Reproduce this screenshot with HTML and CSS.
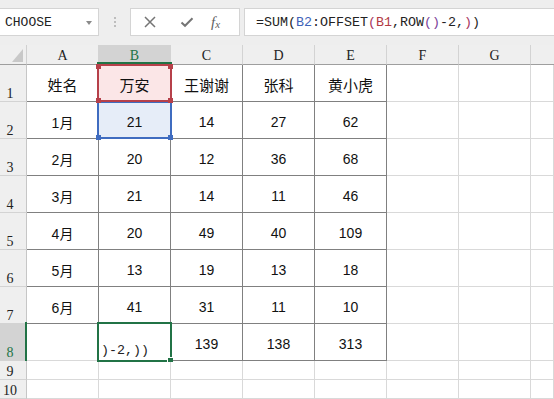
FILE: index.html
```html
<!DOCTYPE html>
<html>
<head>
<meta charset="utf-8">
<link rel="stylesheet" href="styles.css">
</head>
<body>
<div class="app">
  <div class="fbar">
    <div class="namebox"><span class="nb-text">CHOOSE</span><span class="caret"></span></div>
    <div class="grip"><i></i><i></i><i></i></div>
    <div class="btns">
      <svg class="ico" width="14" height="14" viewBox="0 0 14 14"><path d="M2 2 L12 12 M12 2 L2 12" stroke="#757575" stroke-width="1.5" fill="none"/></svg>
      <svg class="ico" width="16" height="14" viewBox="0 0 16 14"><path d="M2.5 7.5 L6 10.8 L13.5 3.2" stroke="#757575" stroke-width="2" fill="none"/></svg>
      <span class="fx">f<sub>x</sub></span>
    </div>
    <div class="formula"><span>=SUM(</span><span class="rb">B2</span><span>:OFFSET</span><span class="p1">(</span><span class="rr">B1</span><span>,ROW</span><span class="p2">()</span><span>-2,</span><span class="p1">)</span><span>)</span></div>
  </div>
  <div class="sheet">
    <div class="grid">
      <div class="corner"><span class="tri"></span></div>
      <div class="ch">A</div><div class="ch sel">B</div><div class="ch">C</div><div class="ch">D</div><div class="ch">E</div><div class="ch">F</div><div class="ch">G</div><div class="ch last"></div>

      <div class="rh">1</div>
      <div class="c t cj">姓名</div><div class="c t cj red">万安</div><div class="c t cj">王谢谢</div><div class="c t cj">张科</div><div class="c t cj">黄小虎</div><div class="c"></div><div class="c"></div><div class="c"></div>

      <div class="rh">2</div>
      <div class="c t">1月</div><div class="c t blue">21</div><div class="c t">14</div><div class="c t">27</div><div class="c t">62</div><div class="c"></div><div class="c"></div><div class="c"></div>

      <div class="rh">3</div>
      <div class="c t">2月</div><div class="c t">20</div><div class="c t">12</div><div class="c t">36</div><div class="c t">68</div><div class="c"></div><div class="c"></div><div class="c"></div>

      <div class="rh">4</div>
      <div class="c t">3月</div><div class="c t">21</div><div class="c t">14</div><div class="c t">11</div><div class="c t">46</div><div class="c"></div><div class="c"></div><div class="c"></div>

      <div class="rh">5</div>
      <div class="c t">4月</div><div class="c t">20</div><div class="c t">49</div><div class="c t">40</div><div class="c t">109</div><div class="c"></div><div class="c"></div><div class="c"></div>

      <div class="rh">6</div>
      <div class="c t">5月</div><div class="c t">13</div><div class="c t">19</div><div class="c t">13</div><div class="c t">18</div><div class="c"></div><div class="c"></div><div class="c"></div>

      <div class="rh">7</div>
      <div class="c t">6月</div><div class="c t">41</div><div class="c t">31</div><div class="c t">11</div><div class="c t">10</div><div class="c"></div><div class="c"></div><div class="c"></div>

      <div class="rh rsel">8</div>
      <div class="c"></div><div class="c edit"><span>)-2,))</span></div><div class="c t">139</div><div class="c t">138</div><div class="c t">313</div><div class="c"></div><div class="c"></div><div class="c"></div>

      <div class="rh sm">9</div>
      <div class="c"></div><div class="c"></div><div class="c"></div><div class="c"></div><div class="c"></div><div class="c"></div><div class="c"></div><div class="c"></div>

      <div class="rh sm">10</div>
      <div class="c"></div><div class="c"></div><div class="c"></div><div class="c"></div><div class="c"></div><div class="c"></div><div class="c"></div><div class="c"></div>
    </div>
    <div class="hl hl-blue"><i class="sq bl"></i><i class="sq br"></i></div>
    <div class="hl hl-red"><i class="sq tl"></i><i class="sq tr"></i><i class="sq bl"></i><i class="sq br"></i></div>
    <div class="hl hl-green"><i class="handle"></i></div>
    <div class="hdr-line"></div>
    <div class="row-line"></div>
  </div>
</div>
</body>
</html>
```
FILE: styles.css
```css
* { box-sizing: border-box; margin: 0; padding: 0; }
html, body { width: 554px; height: 399px; overflow: hidden; background: #fff; }
body { font-family: "Liberation Sans", "Noto Sans CJK SC", sans-serif; color: #111; }

.app { width: 554px; height: 399px; display: flex; flex-direction: column; }

.fbar {
  height: 45px;
  flex: none;
  background: #eeeeee;
  display: flex;
  align-items: flex-start;
  padding-top: 8px;
}
.namebox {
  width: 99px; height: 28px;
  background: #fff;
  border: 1px solid #d4d4d4;
  border-left: none;
  display: flex; align-items: center;
  padding-left: 5px;
  position: relative;
}
.nb-text { font-family: "Liberation Mono", monospace; font-size: 13px; color: #222; }
.caret {
  position: absolute; right: 6px; top: 12px;
  width: 0; height: 0;
  border-left: 3.5px solid transparent; border-right: 3.5px solid transparent;
  border-top: 4px solid #8a8a8a;
}
.grip { width: 31px; height: 28px; display: flex; flex-direction: column; align-items: center; justify-content: center; gap: 2px; }
.grip i { display: block; width: 2px; height: 2px; background: #bdbdbd; }
.btns {
  width: 110px; height: 28px;
  background: #fff;
  border: 1px solid #d4d4d4;
  display: flex; align-items: center;
  padding-left: 12px;
}
.btns .ico:first-child { margin-right: 22px; }
.btns .ico:nth-child(2) { margin-right: 16px; }
.fx { font-family: "Liberation Serif", serif; font-style: italic; font-size: 15px; color: #5f5f5f; line-height: 1; }
.fx sub { font-size: 11px; vertical-align: -1px; }
.formula {
  margin-left: 4px;
  flex: 1; height: 28px;
  background: #fff;
  border: 1px solid #d4d4d4;
  border-right: none;
  display: flex; align-items: center;
  padding-left: 11px;
  font-family: "Liberation Mono", monospace; font-size: 13.33px; color: #222;
  white-space: pre;
}
.rb { color: #3d63b8; }
.rr { color: #b23a44; }
.p1 { color: #a8345e; }
.p2 { color: #7b3f9a; }

.sheet { position: relative; flex: 1; }
.grid {
  display: grid;
  grid-template-columns: 27px repeat(7, 72px) 1fr;
  grid-template-rows: 20px repeat(8, 37px) 19px 19px;
}
.corner {
  background: #efefef;
  border-right: 1px solid #d0d0d0;
  border-bottom: 1px solid #9e9e9e;
  position: relative;
}
.tri {
  position: absolute; right: 3px; bottom: 2px;
  width: 0; height: 0;
  border-left: 11px solid transparent;
  border-bottom: 13px solid #c8c8c8;
}
.ch {
  background: #efefef;
  border-right: 1px solid #d3d3d3;
  border-bottom: 1px solid #9e9e9e;
  font-family: "Liberation Serif", serif; font-size: 14px; color: #222;
  display: flex; justify-content: center; align-items: flex-end;
  padding-bottom: 1px; line-height: 15px;
}
.ch.sel { background: #d3d3d3; color: #217346; border-bottom-color: #217346; }
.ch.last { border-right: none; }
.rh {
  background: #efefef;
  border-right: 1px solid #c6c6c6;
  border-bottom: 1px solid #d3d3d3;
  font-family: "Liberation Serif", serif; font-size: 14px; color: #222;
  display: flex; justify-content: center; align-items: flex-end;
  padding-right: 6px; line-height: 12px; padding-bottom: 1px;
}
.rh.rsel { background: #d3d3d3; color: #217346; }
.c {
  border-right: 1px solid #d9d9d9;
  border-bottom: 1px solid #d9d9d9;
  display: flex; align-items: center; justify-content: center;
  font-size: 14px; padding-top: 3px;
  font-family: "Liberation Sans", "Noto Sans CJK SC", sans-serif;
}
.c.t { border-right-color: #808080; border-bottom-color: #808080; }
.c.cj { font-size: 15px; }
.c.red { background: #fbe6e7; }
.c.blue { background: #e6edf8; }
.c.edit {
  justify-content: flex-start; align-items: flex-end;
  font-family: "Liberation Mono", monospace; font-size: 13.33px;
  padding-left: 2px; padding-bottom: 2px; color: #222;
}

.hl { position: absolute; border: 2px solid; pointer-events: none; }
.hl-red { left: 97px; top: 19px; width: 75px; height: 38px; border-color: #b6404a; }
.hl-blue { left: 97px; top: 56px; width: 75px; height: 38px; border-color: #3f6cc0; }
.hl-green { left: 97px; top: 277px; width: 75px; height: 40px; border-color: #217346; }
.sq { position: absolute; width: 5px; height: 5px; }
.hl-red .sq { background: #b6404a; }
.hl-blue .sq { background: #3f6cc0; }
.sq.tl { left: -3px; top: -2px; }
.sq.tr { right: -3px; top: -2px; }
.sq.bl { left: -3px; bottom: -3px; }
.sq.br { right: -3px; bottom: -3px; }
.handle { position: absolute; right: -3px; bottom: -2px; width: 5px; height: 4px; background: #217346; border-left: 1px solid #fff; border-top: 1px solid #fff; box-sizing: content-box; }
.hdr-line { position: absolute; left: 97px; top: 17px; width: 75px; height: 2px; background: #217346; }
.row-line { position: absolute; left: 25px; top: 277px; width: 2px; height: 39px; background: #217346; }
```
